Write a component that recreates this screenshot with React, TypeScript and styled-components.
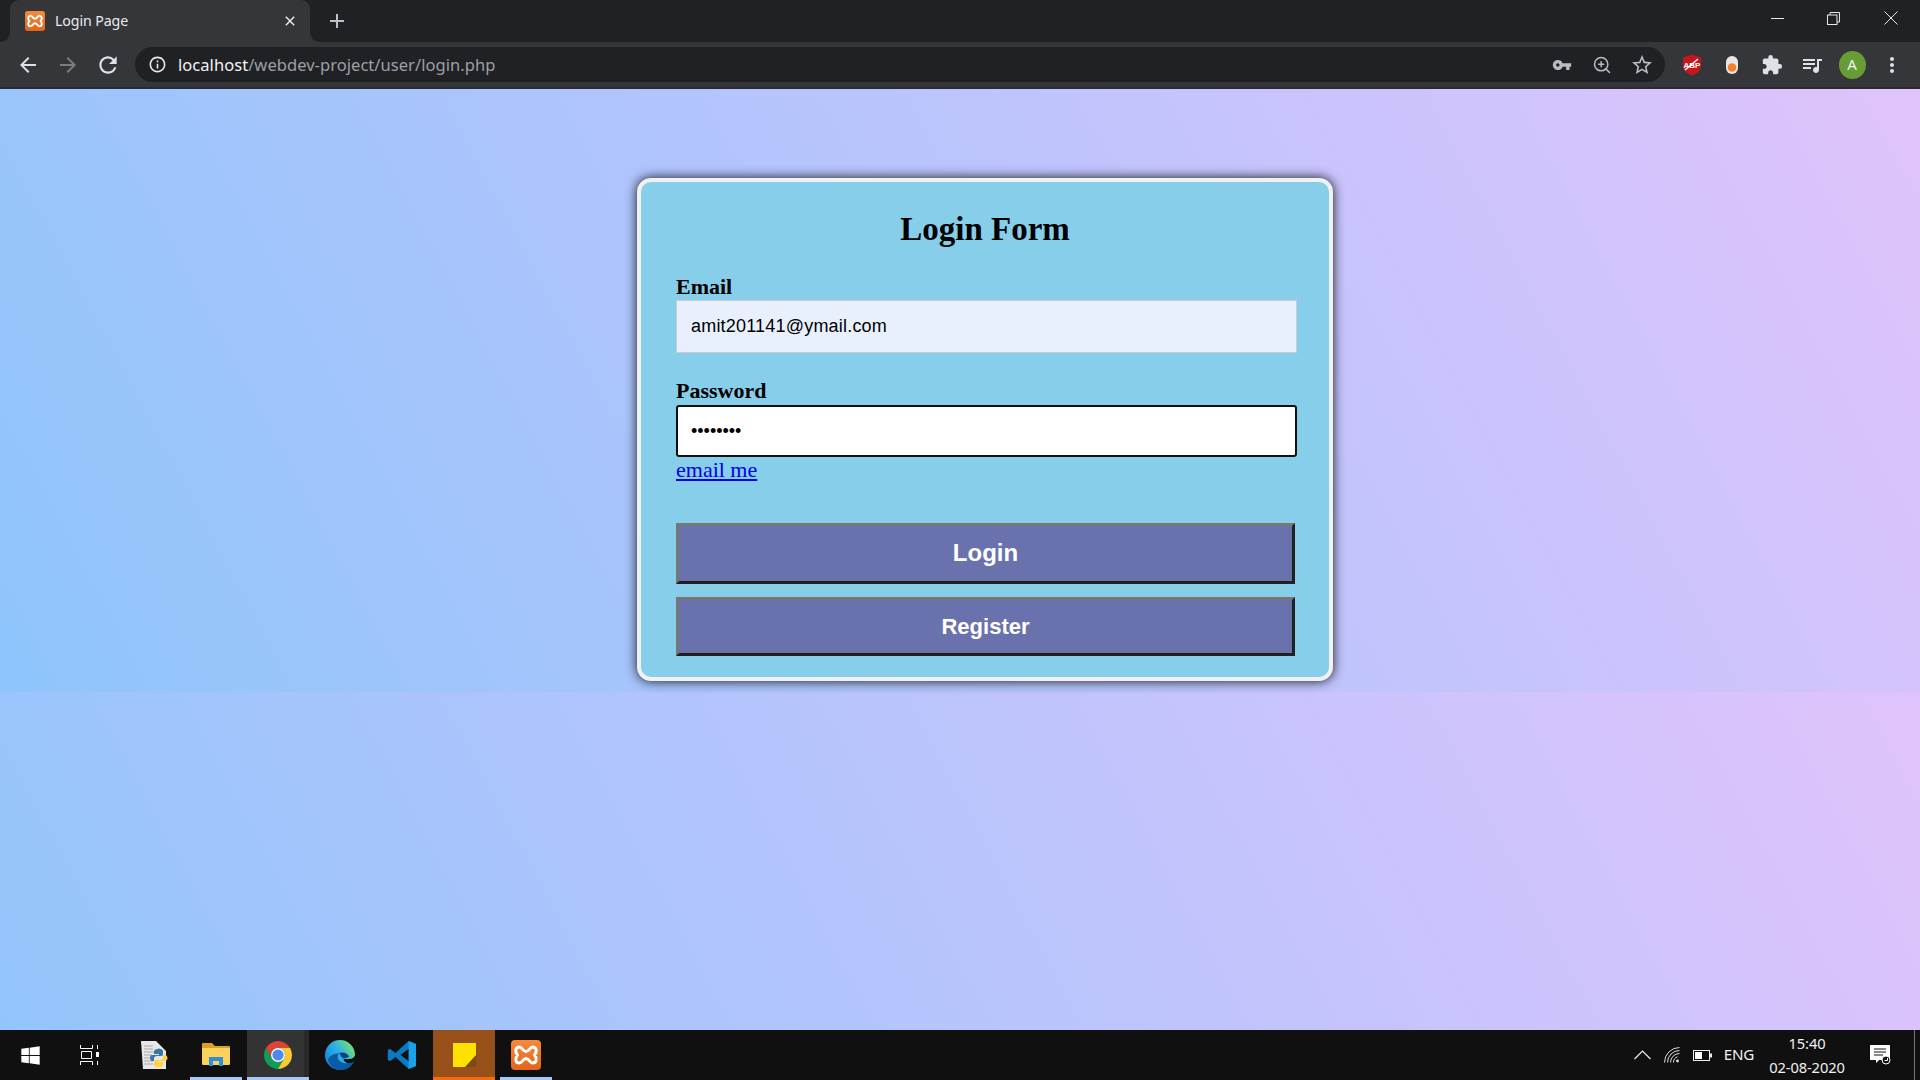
import React from "react";
import styled, { createGlobalStyle } from "styled-components";
import {
  MdArrowBack,
  MdArrowForward,
  MdRefresh,
  MdInfoOutline,
  MdVpnKey,
  MdStarBorder,
  MdExtension,
  MdQueueMusic,
  MdMoreVert,
  MdClose,
  MdAdd,
} from "react-icons/md";
import { FaWindows } from "react-icons/fa";
import { ZoomIn } from "lucide-react";

const Global = createGlobalStyle`
  html, body { margin: 0; padding: 0; height: 100%; overflow: hidden; }
  #root { height: 100%; }
  * { box-sizing: border-box; }
`;

const Shell = styled.div`
  width: 1920px;
  height: 1080px;
  display: flex;
  flex-direction: column;
  overflow: hidden;
`;

const TabStrip = styled.div`
  height: 42px;
  flex: none;
  display: flex;
  align-items: flex-start;
  background: #202124;
  padding-left: 10px;
`;

const Tab = styled.div`
  position: relative;
  width: 300px;
  height: 42px;
  flex: none;
  display: flex;
  align-items: center;
  padding: 0 12px 1px 15px;
  background: #35363a;
  border-radius: 9px 9px 0 0;
  &::before,
  &::after {
    content: "";
    position: absolute;
    bottom: 0;
    width: 9px;
    height: 9px;
  }
  &::before {
    left: -9px;
    background: radial-gradient(circle at 0 0, transparent 8.5px, #35363a 9px);
  }
  &::after {
    right: -9px;
    background: radial-gradient(circle at 100% 0, transparent 8.5px, #35363a 9px);
  }
`;

const TabTitle = styled.span`
  flex: 1;
  margin-left: 10px;
  font: 400 14.2px/18px "Noto Sans", "Open Sans", sans-serif;
  color: #e8eaed;
  letter-spacing: -0.1px;
`;

const NewTab = styled.div`
  display: flex;
  align-items: center;
  justify-content: center;
  margin: 8px 0 0 14px;
  width: 26px;
  height: 26px;
  color: #bdc1c6;
  font-size: 24px;
`;

const WindowControls = styled.div`
  margin-left: auto;
  display: flex;
  height: 36px;
`;

const WindowButton = styled.div<{ $w: number }>`
  width: ${(p) => p.$w}px;
  display: flex;
  align-items: center;
  justify-content: center;
`;

const ToolBar = styled.div`
  height: 47px;
  flex: none;
  display: flex;
  align-items: flex-start;
  padding: 5px 0 0 8px;
  background: #35363a;
  border-bottom: 2px solid #2a2b2e;
`;

const ToolSlot = styled.div<{ $dim?: boolean }>`
  width: 40px;
  height: 35px;
  flex: none;
  display: flex;
  align-items: center;
  justify-content: center;
  color: ${(p) => (p.$dim ? "#7a7c80" : "#dee1e6")};
  font-size: 24px;
`;

const Omnibox = styled.div`
  width: 1530px;
  height: 35px;
  flex: none;
  margin: 0 7px;
  display: flex;
  align-items: center;
  padding: 0 3px 0 13px;
  background: #202124;
  border-radius: 18px;
`;

const InfoIcon = styled.div`
  display: flex;
  color: #e8eaed;
  font-size: 19px;
`;

const UrlText = styled.div`
  flex: 1;
  margin-left: 11px;
  font: 400 16.5px/22px "Noto Sans", "Open Sans", sans-serif;
  letter-spacing: 0.05px;
  color: #9aa0a6;
`;

const UrlHost = styled.span`
  color: #f1f3f4;
`;

const OmniSlot = styled(ToolSlot)`
  color: #b9bcc0;
`;

const Avatar = styled.div`
  width: 27px;
  height: 28px;
  border-radius: 50%;
  background: #669d34;
  color: #f1f3f4;
  display: flex;
  align-items: center;
  justify-content: center;
  font: 400 15px/1 "Noto Sans", sans-serif;
`;

const Page = styled.main`
  flex: 1;
  min-height: 0;
  padding: 89px 0 0 637px;
  background-image: linear-gradient(62deg, #8ec5fc 0%, #e0c3fc 100%);
  background-size: 100% 603px;
  background-repeat: repeat-y;
`;

const Card = styled.form`
  width: 696px;
  height: 503px;
  padding: 28px 35px 0;
  background: #87ceeb;
  border: 4px solid #f1f1f1;
  border-radius: 14px;
  box-shadow: 0 0 12px rgba(0, 0, 0, 0.9);
  font-family: "Liberation Serif", "Times New Roman", serif;
  color: #000;
`;

const Title = styled.h2`
  margin: 0 0 26px;
  font-size: 33px;
  line-height: 38px;
  font-weight: 700;
  text-align: center;
`;

const Label = styled.label`
  display: block;
  font-size: 22px;
  font-weight: 700;
  line-height: 25px;
  height: 26px;
`;

const Input = styled.input<{ $focused?: boolean }>`
  display: block;
  width: 621px;
  height: ${(p) => (p.$focused ? "52px" : "53px")};
  margin-top: ${(p) => (p.$focused ? "1px" : "0")};
  padding: 0 14px;
  border: 1px solid #cccccc;
  background: ${(p) => (p.$focused ? "#ffffff" : "#e8f0fe")};
  border-radius: ${(p) => (p.$focused ? "3px" : "0")};
  outline: ${(p) => (p.$focused ? "2px solid #101010" : "none")};
  outline-offset: -2px;
  font: 400 18px "Liberation Sans", Arial, sans-serif;
  letter-spacing: ${(p) => (p.$focused ? "0" : "0.2px")};
  color: #000;
`;

const FieldGap = styled.div`
  height: 25px;
`;

const MailLink = styled.a`
  display: block;
  height: 66px;
  font-size: 22px;
  line-height: 25px;
  color: #0000ee;
  text-decoration: underline;
`;

const ActionButton = styled.button<{ $large?: boolean }>`
  display: block;
  width: 619px;
  height: ${(p) => (p.$large ? "61px" : "59px")};
  margin-bottom: 13px;
  padding: 0 0 ${(p) => (p.$large ? "2px" : "0")};
  background: #6a72ae;
  border-width: 3px;
  border-style: solid;
  border-color: #767676 #212121 #212121 #767676;
  color: #fff;
  font: 700 ${(p) => (p.$large ? "24px" : "22px")} "Liberation Sans", Arial, sans-serif;
`;

const TaskBar = styled.footer`
  height: 50px;
  flex: none;
  display: flex;
  align-items: stretch;
  background: #101010;
`;

const TaskSlot = styled.div<{ $w: number; $shift?: number; $state?: "open" | "active" | "alert" }>`
  position: relative;
  width: ${(p) => p.$w}px;
  flex: none;
  display: flex;
  align-items: center;
  justify-content: center;
  padding-left: ${(p) => p.$shift ?? 0}px;
  color: #fff;
  background: ${(p) =>
    p.$state === "active"
      ? "linear-gradient(to right, #333333 57px, #2a2a2a 57px)"
      : p.$state === "alert"
        ? "#97501a"
        : "transparent"};
  ${(p) =>
    p.$state
      ? `&::after {
    content: "";
    position: absolute;
    bottom: 0;
    height: 3px;
    left: ${p.$state === "open" ? "5px" : "0"};
    right: ${p.$state === "open" ? "5px" : "0"};
    background: ${p.$state === "alert" ? "#f76a0c" : "#a8c7fa"};
  }`
      : ""}
`;

const Tray = styled.div`
  margin-left: auto;
  display: flex;
  align-items: center;
  color: #f0f0f0;
  font: 400 14px/1 "Noto Sans", "Open Sans", sans-serif;
`;

const TrayIcon = styled.div<{ $w: number }>`
  width: ${(p) => p.$w}px;
  display: flex;
  justify-content: center;
`;

const TrayLang = styled.div`
  width: 42px;
  text-align: center;
  margin-left: 4px;
  font-size: 15.2px;
  letter-spacing: -0.2px;
`;

const Clock = styled.div`
  width: 84px;
  margin-left: 5px;
  display: flex;
  flex-direction: column;
  gap: 9px;
  align-items: center;
  font-size: 14.7px;
  letter-spacing: -0.1px;
`;

const NoteSlot = styled.div`
  width: 46px;
  margin: 0 11px 0 8px;
  display: flex;
  justify-content: center;
`;

const ShowDesktop = styled.div`
  width: 6px;
  align-self: stretch;
  border-left: 1px solid #777;
`;

const XamppIcon = ({ size }: { size: number }) => (
  <svg width={size} height={size} viewBox="0 0 30 30">
    <defs>
      <linearGradient id={`xa${size}`} x1="0" y1="0" x2="0" y2="1">
        <stop offset="0" stopColor="#f58a3c" />
        <stop offset="1" stopColor="#e2651a" />
      </linearGradient>
    </defs>
    <rect width="30" height="30" rx="4" fill={`url(#xa${size})`} />
    <path
      d="M8.500 7C11 7 12 11.500 15 11.500C18 11.500 19 7 21.500 7C25.500 7 26.500 11.500 23.500 15C26.500 18.500 25.500 23 21.500 23C19 23 18 18.500 15 18.500C12 18.500 11 23 8.500 23C4.500 23 3.500 18.500 6.500 15C3.500 11.500 4.500 7 8.500 7Z"
      fill="none"
      stroke="#fff"
      strokeWidth="3"
      strokeLinejoin="round"
    />
  </svg>
);

const AbpIcon = () => (
  <svg width="20" height="22" viewBox="0 0 20 22">
    <path d="M10 0.500 19 3.500V13C19 17 14 20 10 21.500 6 20 1 17 1 13V3.500Z" fill="#c5161d" />
    <text x="10" y="14" textAnchor="middle" fontFamily="Liberation Sans" fontWeight="700" fontSize="8" fill="#fff">
      ABP
    </text>
    <path d="M3 16L16 5" stroke="#fff" strokeWidth="1.400" />
  </svg>
);

const PillIcon = () => (
  <svg width="14" height="20" viewBox="0 0 14 20">
    <rect x="1" y="1" width="12" height="18" rx="6" fill="#e6e6e6" />
    <circle cx="7" cy="12.500" r="4.300" fill="#f5802a" />
  </svg>
);

const ChromeIcon = () => (
  <svg width="28" height="28" viewBox="4 4 40 40">
    <path d="M6.680 14A20 20 0 0 1 41.320 14H24A10 10 0 0 0 15.340 29Z" fill="#db4437" />
    <path d="M6.680 14A20 20 0 0 0 24 44L32.660 29A10 10 0 0 1 15.340 29Z" fill="#0f9d58" />
    <path d="M41.320 14A20 20 0 0 1 24 44L32.660 29A10 10 0 0 0 24 14Z" fill="#fcc934" />
    <circle cx="24" cy="24" r="10" fill="#fff" />
    <circle cx="24" cy="24" r="8" fill="#4a8af4" />
  </svg>
);

const EdgeIcon = () => (
  <svg width="30" height="30" viewBox="0 0 30 30">
    <defs>
      <linearGradient id="edgeA" x1="0" y1="0.9" x2="1" y2="0.25">
        <stop offset="0" stopColor="#0f7fd6" />
        <stop offset="0.55" stopColor="#2bb0e8" />
        <stop offset="1" stopColor="#7be36c" />
      </linearGradient>
    </defs>
    <circle cx="15" cy="15" r="15" fill="url(#edgeA)" />
    <path d="M3 20C5 28 12 30 17 30C23 30 27 26 30 20C25 24 20 24 16 22C12 20 12 15 14 13C8 14 4 16 3 20Z" fill="#0b5aa6" />
    <path d="M14 13C18 11.500 23 13 24 17C21 18.500 17.500 18.500 16 16.500C15.500 15 15 14 14 13Z" fill="#0d3f82" />
    <path d="M30 15.500C29 19 23 20 18.500 18.500C18.500 21 21 23.500 25 23C27 23 29 22 30 20.500Z" fill="#101010" />
  </svg>
);

const CodeIcon = () => (
  <svg width="30" height="30" viewBox="0 0 30 30">
    <path d="M21.500 1 8.500 13 3 8.800.8 10v10L3 21.200 8.500 17l13 12L29 26V4Z" fill="#0b78c2" />
    <path d="M21.500 1 29 4v22l-7.500 3Z" fill="#1ba1ea" />
    <path d="M21.500 9 13.500 15l8 6Z" fill="#101010" />
  </svg>
);

const PythonFileIcon = () => (
  <svg width="30" height="30" viewBox="0 0 30 30">
    <path d="M1 1h15l10 10v18H3z" fill="#e8e8e8" />
    <path d="M4 6h9M4 9h9M4 12h12M4 15h8M4 18h8M4 21h9M4 24h9" stroke="#a9a9a9" strokeWidth="1" />
    <path d="M18 9c-3 0-4 1-4 3v2h5v1h-7c-1.500 0-2 1.500-2 3s1 3 2 3h2v-2.500c0-1.500 1-2.500 3-2.500h4c1.500 0 2-1 2-2v-2.500c0-2-2-3-5-3z" fill="#3776ab" />
    <path d="M19 27c3 0 4-1 4-3v-2h-5v-1h7c1.500 0 2.500-1.500 2.500-3s-1-3-2.500-3h-2v2.500c0 1.500-1 2.500-3 2.500h-4c-1.500 0-2 1-2 2v2.500c0 2 2 3 5 3z" fill="#ffd43b" />
  </svg>
);

const FolderIcon = () => (
  <svg width="28" height="26" viewBox="0 0 28 26">
    <path d="M0 2a1 1 0 0 1 1-1h9l3 3h14a1 1 0 0 1 1 1v3H0z" fill="#d9a022" />
    <path d="M0 6h27a1 1 0 0 1 1 1v15a1 1 0 0 1-1 1H1a1 1 0 0 1-1-1z" fill="#fbd25e" />
    <path d="M7 24V15h14v9h-4v-5h-6v5z" fill="#2f8fd8" />
  </svg>
);

const StickyIcon = () => (
  <svg width="23" height="24" viewBox="0 0 23 24">
    <rect width="23" height="24" fill="#ffe100" />
    <path d="M23 12v12H12Z" fill="#7d4a12" />
  </svg>
);

const TaskViewIcon = () => (
  <svg width="20" height="20" viewBox="0 0 20 20" fill="none" stroke="#fff" strokeWidth="1">
    <path d="M.5 0v3.500h12V0M1.500 6.500h10v7h-10zM.5 20v-3.500h12V20" />
    <path d="M17.500 0v4M17.500 16v4" />
    <rect x="16" y="7" width="3" height="5" fill="#fff" stroke="none" />
  </svg>
);

const WifiIcon = () => (
  <svg width="16" height="16" viewBox="0 0 16 16" fill="none" stroke="#ddd" strokeWidth="1">
    <path d="M.5 15.500a15 15 0 0 1 15-15M3.500 15.500a12 12 0 0 1 12-12M6.500 15.500a9 9 0 0 1 9-9M9.500 15.500a6 6 0 0 1 4-5.700" />
    <circle cx="13.500" cy="14" r="1.400" fill="#ddd" stroke="none" />
  </svg>
);

const BatteryIcon = () => (
  <svg width="19" height="11" viewBox="0 0 19 11">
    <rect x=".5" y=".5" width="16" height="10" fill="none" stroke="#eee" />
    <rect x="2" y="2" width="7" height="7" fill="#fff" />
    <rect x="17" y="3.500" width="2" height="4" fill="#eee" />
  </svg>
);

const NoteIcon = () => (
  <svg width="21" height="20" viewBox="0 0 21 20">
    <path d="M0 0h20v15H9l-3 3v-3H0z" fill="#fff" />
    <path d="M4 4h12M4 7h12M4 10h9" stroke="#101010" strokeWidth="1" />
    <circle cx="16" cy="15" r="4" fill="#101010" stroke="#fff" strokeWidth="1" />
    <path d="M14.500 15.500h3V13" stroke="#fff" fill="none" strokeWidth="1" />
  </svg>
);

export default function App() {
  return (
    <Shell>
      <Global />
      <TabStrip>
        <Tab>
          <XamppIcon size={20} />
          <TabTitle>Login Page</TabTitle>
          <MdClose size={16} color="#f1f3f4" />
        </Tab>
        <NewTab>
          <MdAdd />
        </NewTab>
        <WindowControls>
          <WindowButton $w={57}>
            <svg width="13" height="1"><rect width="13" height="1" fill="#e8e8e8" /></svg>
          </WindowButton>
          <WindowButton $w={55}>
            <svg width="13" height="13" fill="none" stroke="#e8e8e8">
              <path d="M3 3V.5h9.500V10H10" />
              <rect x=".5" y="3" width="9.500" height="9.500" />
            </svg>
          </WindowButton>
          <WindowButton $w={59}>
            <svg width="14" height="14" stroke="#e8e8e8">
              <path d="M.5.500l13 13M13.500.500l-13 13" />
            </svg>
          </WindowButton>
        </WindowControls>
      </TabStrip>
      <ToolBar>
        <ToolSlot><MdArrowBack /></ToolSlot>
        <ToolSlot $dim><MdArrowForward /></ToolSlot>
        <ToolSlot><MdRefresh size={26} /></ToolSlot>
        <Omnibox>
          <InfoIcon><MdInfoOutline /></InfoIcon>
          <UrlText>
            <UrlHost>localhost</UrlHost>/webdev-project/user/login.php
          </UrlText>
          <OmniSlot><MdVpnKey size={20} /></OmniSlot>
          <OmniSlot><ZoomIn size={20} strokeWidth={1.8} /></OmniSlot>
          <OmniSlot><MdStarBorder /></OmniSlot>
        </Omnibox>
        <ToolSlot><AbpIcon /></ToolSlot>
        <ToolSlot><PillIcon /></ToolSlot>
        <ToolSlot><MdExtension size={22} /></ToolSlot>
        <ToolSlot><MdQueueMusic /></ToolSlot>
        <ToolSlot><Avatar>A</Avatar></ToolSlot>
        <ToolSlot><MdMoreVert /></ToolSlot>
      </ToolBar>
      <Page>
        <Card onSubmit={(e) => e.preventDefault()}>
          <Title>Login Form</Title>
          <Label>Email</Label>
          <Input type="email" defaultValue="amit201141@ymail.com" readOnly />
          <FieldGap />
          <Label>Password</Label>
          <Input type="password" defaultValue="amit2011" readOnly $focused />
          <MailLink href="#">email me</MailLink>
          <ActionButton type="button" $large>Login</ActionButton>
          <ActionButton type="button">Register</ActionButton>
        </Card>
      </Page>
      <TaskBar>
        <TaskSlot $w={60}><FaWindows size={21} /></TaskSlot>
        <TaskSlot $w={60}><TaskViewIcon /></TaskSlot>
        <TaskSlot $w={65} $shift={5}><PythonFileIcon /></TaskSlot>
        <TaskSlot $w={62} $state="open"><FolderIcon /></TaskSlot>
        <TaskSlot $w={62} $state="active"><ChromeIcon /></TaskSlot>
        <TaskSlot $w={62}><EdgeIcon /></TaskSlot>
        <TaskSlot $w={62}><CodeIcon /></TaskSlot>
        <TaskSlot $w={62} $state="alert"><StickyIcon /></TaskSlot>
        <TaskSlot $w={62} $state="open"><XamppIcon size={30} /></TaskSlot>
        <Tray>
          <TrayIcon $w={24}>
            <svg width="17" height="10" fill="none" stroke="#eee" strokeWidth="1.200"><path d="M.5 9l8-8 8 8" /></svg>
          </TrayIcon>
          <TrayIcon $w={36}><WifiIcon /></TrayIcon>
          <TrayIcon $w={24}><BatteryIcon /></TrayIcon>
          <TrayLang>ENG</TrayLang>
          <Clock>
            <span>15:40</span>
            <span>02-08-2020</span>
          </Clock>
          <NoteSlot><NoteIcon /></NoteSlot>
          <ShowDesktop />
        </Tray>
      </TaskBar>
    </Shell>
  );
}
